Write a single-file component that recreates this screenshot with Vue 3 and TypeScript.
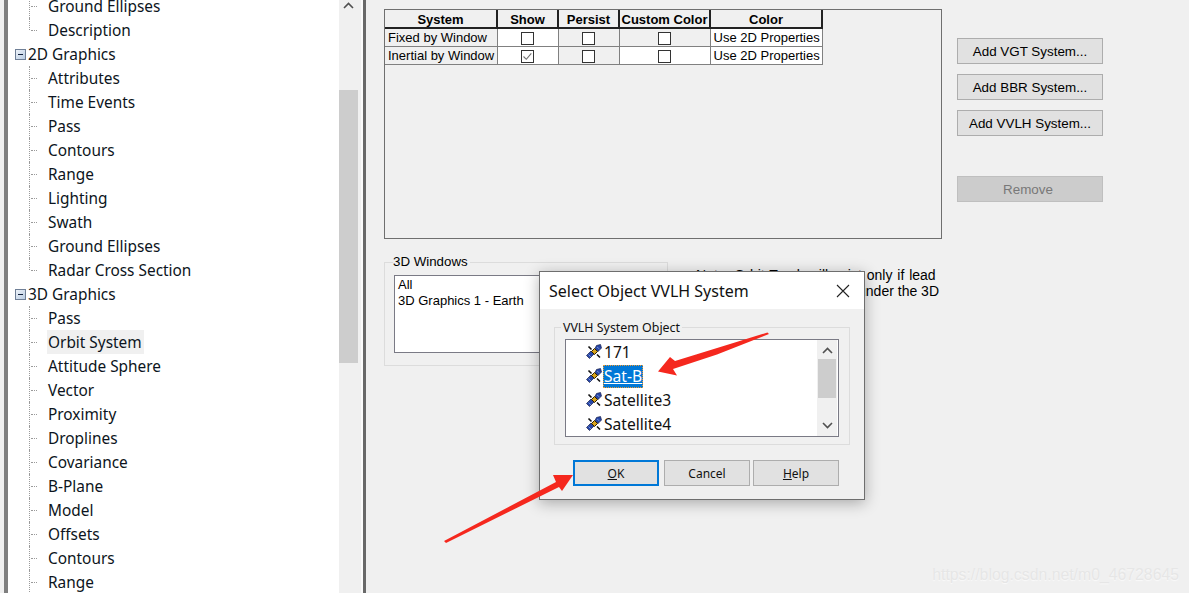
<script setup lang="ts">
type TreeRow = { label: string; group?: boolean; last?: boolean; selected?: boolean }

const treeRows: TreeRow[] = [
  { label: 'Ground Ellipses' },
  { label: 'Description', last: true },
  { label: '2D Graphics', group: true },
  { label: 'Attributes' },
  { label: 'Time Events' },
  { label: 'Pass' },
  { label: 'Contours' },
  { label: 'Range' },
  { label: 'Lighting' },
  { label: 'Swath' },
  { label: 'Ground Ellipses' },
  { label: 'Radar Cross Section', last: true },
  { label: '3D Graphics', group: true },
  { label: 'Pass' },
  { label: 'Orbit System', selected: true },
  { label: 'Attitude Sphere' },
  { label: 'Vector' },
  { label: 'Proximity' },
  { label: 'Droplines' },
  { label: 'Covariance' },
  { label: 'B-Plane' },
  { label: 'Model' },
  { label: 'Offsets' },
  { label: 'Contours' },
  { label: 'Range' },
]

const systems = [
  { name: 'Fixed by Window', show: false },
  { name: 'Inertial by Window', show: true },
]

const objects = ['171', 'Sat-B', 'Satellite3', 'Satellite4']
</script>

<template>
  <div class="screen">
    <aside class="tree-pane">
      <div class="tree">
        <div
          v-for="(row, i) in treeRows"
          :key="i"
          class="tree-row"
          :class="{ group: row.group, child: !row.group, last: row.last }"
        >
          <span v-if="row.group" class="expander"><i /></span>
          <span class="tree-label" :class="{ selected: row.selected }">{{ row.label }}</span>
        </div>
      </div>
      <div class="tree-scroll">
        <svg class="chev-up" width="11" height="7" viewBox="0 0 11 7"><path d="M1 6l4.500-4.500L10 6" fill="none" stroke="#505050" stroke-width="1.600" /></svg>
        <div class="tree-thumb" />
      </div>
    </aside>

    <main class="panel">
      <div class="top-row">
        <div class="systems-box">
          <table class="systems">
            <thead>
              <tr>
                <th class="c1">System</th>
                <th class="c2">Show</th>
                <th class="c2">Persist</th>
                <th class="c4">Custom Color</th>
                <th class="c1">Color</th>
              </tr>
            </thead>
            <tbody>
              <tr v-for="s in systems" :key="s.name">
                <td class="name">{{ s.name }}</td>
                <td class="white"><span class="check">
                  <svg v-if="s.show" width="11" height="11" viewBox="0 0 11 11"><path d="M1.500 5.500l2.800 2.800 5-6" fill="none" stroke="#707070" stroke-width="1.100" /></svg>
                </span></td>
                <td><span class="check" /></td>
                <td :class="{ white: s.show }"><span class="check" /></td>
                <td class="white">Use 2D Properties</td>
              </tr>
            </tbody>
          </table>
        </div>
        <div class="actions">
          <button class="btn">Add VGT System...</button>
          <button class="btn">Add BBR System...</button>
          <button class="btn">Add VVLH System...</button>
          <button class="btn disabled">Remove</button>
        </div>
      </div>

      <div class="bottom-row">
        <fieldset class="windows">
          <legend>3D Windows</legend>
          <div class="windows-list">
            <div>All</div>
            <div>3D Graphics 1 - Earth</div>
          </div>
        </fieldset>
        <p class="note">
          <span class="note-first">Note: Orbit Track will exist only if lead</span>
          <span class="note-second">or trail type is set to on under the 3D</span>
        </p>
      </div>
    </main>

    <section class="dialog">
      <header class="dialog-title">
        <span>Select Object VVLH System</span>
        <svg width="14" height="14" viewBox="0 0 14 14"><path d="M1 1l12 12M13 1L1 13" stroke="#222" stroke-width="1.100" fill="none" /></svg>
      </header>
      <div class="dialog-body">
        <fieldset class="object-group">
          <legend>VVLH System Object</legend>
          <div class="object-list">
            <div class="object-items">
              <div v-for="name in objects" :key="name" class="object-row">
                <svg class="sat" width="16" height="16" viewBox="0 0 16 16">
                  <path d="M2.500 2.500l3 3M14 13.500l-3-3" stroke="#111" stroke-width="1.600" />
                  <path d="M0.500 11.500l4.500-4.500 3 3-4.500 4.500z" fill="#2746a8" stroke="#141c48" stroke-width="0.700" />
                  <path d="M10.500 1.500l4-1 1 3.500-3.500 3.500-3-3z" fill="#2746a8" stroke="#141c48" stroke-width="0.700" />
                  <path d="M5.500 7.500l3-3 3 3-3 3z" fill="#d8a41c" stroke="#2a1e00" stroke-width="1" />
                  <path d="M2.500 10.500l2.500 2.500M11 3l2.500 2" stroke="#8fb0ea" stroke-width="0.700" />
                </svg>
                <span class="object-name" :class="{ active: name === 'Sat-B' }">{{ name }}</span>
              </div>
            </div>
            <div class="object-scroll">
              <svg width="11" height="7" viewBox="0 0 11 7"><path d="M1 6l4.500-4.500L10 6" fill="none" stroke="#505050" stroke-width="1.600" /></svg>
              <div class="object-thumb" />
              <svg width="11" height="7" viewBox="0 0 11 7"><path d="M1 1l4.500 4.500L10 1" fill="none" stroke="#505050" stroke-width="1.600" /></svg>
            </div>
          </div>
        </fieldset>
        <div class="dialog-buttons">
          <button class="dlg-btn primary"><u>O</u>K</button>
          <button class="dlg-btn cancel">Cancel</button>
          <button class="dlg-btn"><u>H</u>elp</button>
        </div>
      </div>
    </section>

    <svg class="arrows" width="1189" height="593" viewBox="0 0 1189 593">
      <path d="M767.500 332.500L769 334 717 354.500 673 369 677 375.500 658 371.500 670 357 675 361z" fill="#f5281e" />
      <path d="M444 541L556 482 553 475 573 475 562 491 559 487 446 543z" fill="#f5281e" />
    </svg>

    <div class="watermark">https://blog.csdn.net/m0_46728645</div>
  </div>
</template>

<style>
html,
body {
  margin: 0;
  background: #f0f0f0;
}
</style>

<style scoped>
.screen {
  position: relative;
  display: flex;
  width: 1189px;
  height: 593px;
  overflow: hidden;
  background: #f0f0f0;
  color: #000;
  font-family: "Liberation Sans", Arial, sans-serif;
  font-size: 13px;
}
.tree-pane {
  display: flex;
  flex: none;
  width: 353px;
  margin-left: 4px;
  border-left: 4px solid #7f7f7f;
  border-right: 2px solid #fbfbfb;
}
.tree {
  width: 331px;
  margin-top: -6px;
  background: #fff;
  font-family: "Noto Sans", sans-serif;
  font-size: 15.400px;
  color: #0c1420;
}
.tree-row {
  position: relative;
  display: flex;
  align-items: center;
  height: 24px;
  white-space: nowrap;
}
.tree-row.group {
  padding-left: 7px;
}
.tree-row.child {
  padding-left: 39px;
}
.tree-row.child::before {
  content: "";
  position: absolute;
  left: 21px;
  top: 0;
  bottom: 0;
  border-left: 1px dotted #9a9a9a;
}
.tree-row.child.last::before {
  bottom: 12px;
}
.tree-row.child::after {
  content: "";
  position: absolute;
  left: 23px;
  top: 12px;
  width: 6px;
  border-top: 1px dotted #9a9a9a;
}
.expander {
  display: flex;
  align-items: center;
  justify-content: center;
  box-sizing: border-box;
  width: 11px;
  height: 11px;
  margin-right: 1px;
  border: 1px solid #6f7f96;
  background: linear-gradient(135deg, #eef3f9, #b9cce2);
}
.expander i {
  width: 5px;
  height: 1px;
  background: #10203c;
}
.tree-label {
  display: flex;
  align-items: center;
  box-sizing: border-box;
  height: 24px;
  padding: 1px 2px 0 1px;
}
.tree-label.selected {
  background: #f0f0f0;
}
.tree-scroll {
  width: 19px;
  background: #f0f0f0;
}
.chev-up {
  display: block;
  margin: 2px 0 0 4px;
}
.tree-thumb {
  height: 273px;
  margin-top: 81px;
  background: #cdcdcd;
}
.panel {
  flex: 1;
  box-sizing: border-box;
  padding: 9px 0 0 18px;
  border-left: 3px solid #696969;
}
.top-row {
  display: flex;
  gap: 15px;
}
.systems-box {
  box-sizing: border-box;
  width: 558px;
  height: 230px;
  border: 1px solid #6f6f6f;
}
.systems {
  border-collapse: collapse;
  table-layout: fixed;
  width: 437px;
  font-size: 13px;
}
.systems th {
  box-sizing: border-box;
  height: 18px;
  padding: 1px 0 0;
  background: #f0f0f0;
  border-right: 2px solid #222;
  border-bottom: 2px solid #222;
  font-weight: bold;
  line-height: 15px;
  white-space: nowrap;
}
.systems .c1 {
  width: 112px;
}
.systems .c2 {
  width: 61px;
}
.systems .c4 {
  width: 91px;
}
.systems td {
  box-sizing: border-box;
  height: 18px;
  padding: 1px 0 0 3px;
  border-right: 1px solid #808080;
  border-bottom: 1px solid #808080;
  line-height: 15px;
  white-space: nowrap;
  text-align: left;
}
.systems td:has(.check) {
  padding: 0;
  text-align: center;
}
.systems td.white {
  background: #fff;
}
.check {
  display: inline-flex;
  align-items: center;
  justify-content: center;
  box-sizing: border-box;
  width: 13px;
  height: 13px;
  margin-top: 2px;
  border: 1px solid #333;
  background: #fff;
  vertical-align: top;
}
.actions {
  display: flex;
  flex-direction: column;
  gap: 10px;
  width: 146px;
  padding-top: 29px;
}
.btn {
  height: 26px;
  padding: 0;
  border: 1.500px solid #adadad;
  background: #e1e1e1;
  color: #000;
  font: 13.400px "Liberation Sans", Arial, sans-serif;
}
.btn.disabled {
  margin-top: 30px;
  padding-right: 4px;
  background: #cccccc;
  border-color: #bfbfbf;
  color: #787878;
}
.bottom-row {
  display: flex;
  align-items: flex-start;
  margin-top: 15px;
}
.windows {
  box-sizing: border-box;
  width: 284px;
  height: 112px;
  margin: 0;
  padding: 0 0 0 9px;
  border: 1px solid #dcdcdc;
}
.windows legend {
  margin-left: -1px;
  padding: 0 2px 0 0;
  font-size: 13.300px;
  line-height: 16px;
}
.windows-list {
  box-sizing: border-box;
  height: 78px;
  margin-top: 5px;
  padding: 1px 3px;
  border: 1px solid #7a7a85;
  background: #fff;
  line-height: 16px;
}
.note {
  display: flex;
  flex-direction: column;
  width: 243px;
  margin: 13px 0 0 28px;
  font-size: 14px;
  line-height: 16px;
  white-space: nowrap;
}
.note-first {
  word-spacing: 1px;
}
.note-second {
  text-align: right;
}
.dialog {
  position: absolute;
  left: 539px;
  top: 271px;
  box-sizing: border-box;
  width: 326px;
  height: 229px;
  border: 1px solid #6e6e6e;
  background: #f0f0f0;
  box-shadow: 0 3px 14px rgba(0, 0, 0, 0.3);
  font-family: "Noto Sans", sans-serif;
  color: #111;
}
.dialog-title {
  display: flex;
  align-items: center;
  justify-content: space-between;
  height: 37px;
  padding: 0 14px 0 9px;
  background: #fff;
  font-size: 16px;
}
.dialog-body {
  padding: 10px 14px 0;
}
.object-group {
  box-sizing: border-box;
  height: 126px;
  margin: 0;
  padding: 0 10px;
  border: 1px solid #dcdcdc;
}
.object-group legend {
  margin-left: -4px;
  padding: 1px 2px 0;
  font-size: 12.400px;
  line-height: 15px;
}
.object-list {
  display: flex;
  justify-content: space-between;
  box-sizing: border-box;
  height: 98px;
  margin-top: 4px;
  border: 1px solid #7a7a85;
  background: #fff;
}
.object-items {
  padding-left: 20px;
}
.object-row {
  display: flex;
  align-items: center;
  gap: 1px;
  height: 24px;
  font-size: 15.600px;
}
.sat {
  flex: none;
}
.object-name {
  padding: 0 1px;
  line-height: 23px;
}
.object-name.active {
  background: #0078d7;
  color: #fff;
  outline: 1px dotted #f09a30;
  outline-offset: -1px;
  text-decoration: underline;
}
.object-scroll {
  display: flex;
  flex-direction: column;
  align-items: center;
  width: 20px;
  margin-right: 1px;
  padding-top: 7px;
  background: #f0f0f0;
}
.object-thumb {
  align-self: stretch;
  height: 39px;
  margin: 5px 1px 24px;
  background: #cdcdcd;
}
.dialog-buttons {
  display: flex;
  gap: 5px;
  margin: 15px 0 0 19px;
}
.dlg-btn {
  box-sizing: border-box;
  width: 86px;
  height: 26px;
  padding: 0;
  border: 1px solid #adadad;
  background: #e1e1e1;
  color: #111;
  font: 12px "Noto Sans", sans-serif;
}
.dlg-btn.primary {
  border: 2px solid #0078d7;
}
.dlg-btn.cancel {
  margin-right: -2px;
}
.arrows {
  position: absolute;
  left: 0;
  top: 0;
  pointer-events: none;
}
.watermark {
  position: absolute;
  right: 10px;
  top: 566px;
  font-size: 15.800px;
  color: #e6e6e6;
  text-shadow: 0 1px 1px #fafafa;
}
</style>
